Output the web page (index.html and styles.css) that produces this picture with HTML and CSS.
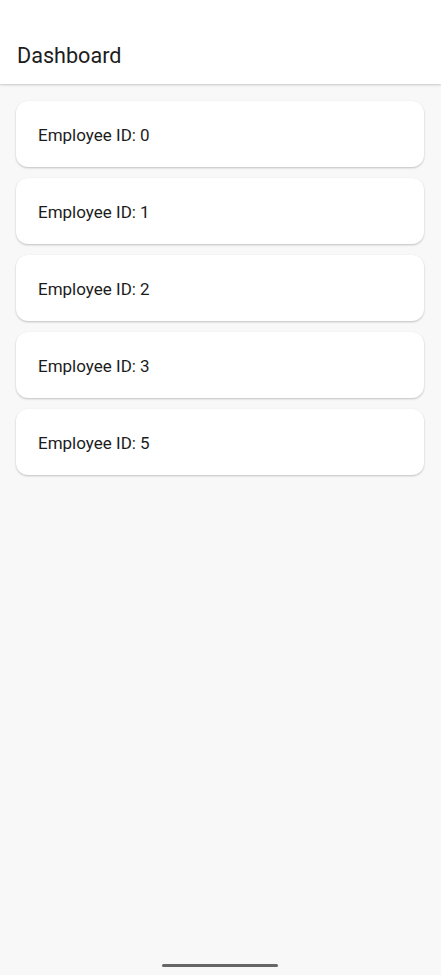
FILE: index.html
```html
<!DOCTYPE html>
<html>
<head>
<meta charset="utf-8">
<link rel="stylesheet" href="styles.css">
</head>
<body>
<div class="screen">
  <header class="appbar"><h1 class="title">Dashboard</h1></header>
  <main class="list">
    <div class="card">Employee ID: 0</div>
    <div class="card">Employee ID: 1</div>
    <div class="card">Employee ID: 2</div>
    <div class="card">Employee ID: 3</div>
    <div class="card">Employee ID: 5</div>
  </main>
  <div class="home-indicator"></div>
</div>
</body>
</html>
```
FILE: styles.css
```css
html, body {
  margin: 0;
  padding: 0;
}
body {
  background: #f8f8f8;
  font-family: Roboto, "Noto Sans", sans-serif;
  color: #1c1c1c;
}
.screen {
  position: relative;
  width: 441px;
  height: 975px;
  overflow: hidden;
}
.appbar {
  height: 84px;
  box-sizing: border-box;
  background: #ffffff;
  padding: 42px 17px 0;
  box-shadow: 0 1px 3px rgba(0,0,0,0.14), 0 1px 1px rgba(0,0,0,0.06);
  position: relative;
  z-index: 1;
}
.title {
  margin: 0;
  font-size: 21.6px;
  font-weight: 400;
  line-height: 28px;
  color: #1d1d1d;
}
.list {
  display: flex;
  flex-direction: column;
  gap: 11px;
  padding: 17px 17px 0 16px;
}
.card {
  height: 66px;
  box-sizing: border-box;
  background: #ffffff;
  border-radius: 12px;
  box-shadow: 0 1px 2px rgba(0,0,0,0.18), 0 1px 3px rgba(0,0,0,0.06);
  display: flex;
  align-items: center;
  padding-left: 22px;
  padding-top: 2px;
  font-size: 17px;
  color: #1c1c1c;
}
.home-indicator {
  position: absolute;
  left: 162px;
  top: 964px;
  width: 116px;
  height: 3px;
  border-radius: 2px;
  background: #666666;
}
```
